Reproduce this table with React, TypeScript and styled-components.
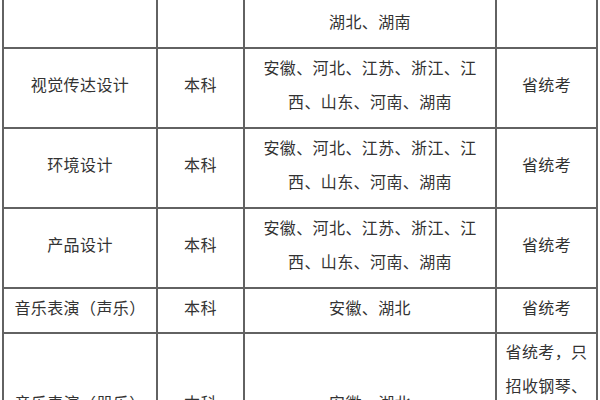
import React from "react";
import styled, { createGlobalStyle } from "styled-components";

const Global = createGlobalStyle`
  html, body { margin: 0; padding: 0; background: #ffffff; }
`;

const Frame = styled.div`
  width: 600px;
  height: 400px;
  overflow: hidden;
  background: #ffffff;
`;

const Table = styled.table`
  border-collapse: collapse;
  table-layout: fixed;
  width: 596px;
  margin: -67px 0 0 2px;
  font-family: "Noto Sans CJK SC", "Noto Sans", sans-serif;
  font-size: 16px;
  letter-spacing: 0.4px;
  line-height: 34px;
  color: #333333;
`;

const Col = styled.col<{ $w: number }>`
  width: ${(p) => p.$w}px;
`;

const Row = styled.tr<{ $h: number }>`
  height: ${(p) => p.$h}px;
`;

const Cell = styled.td`
  border: 2px solid #626262;
  text-align: center;
  vertical-align: middle;
  padding: 0 4px 8px;
  white-space: nowrap;
`;

type RowData = { name: string; level: string; regions: string[]; exam: string[]; h: number };

const rows: RowData[] = [
  {
    name: "数字媒体艺术",
    level: "本科",
    regions: ["安徽、河北、江苏、浙江、江", "西、山东、河南、福建、四", "湖北、湖南"],
    exam: ["省统考"],
    h: 114,
  },
  {
    name: "视觉传达设计",
    level: "本科",
    regions: ["安徽、河北、江苏、浙江、江", "西、山东、河南、湖南"],
    exam: ["省统考"],
    h: 80,
  },
  {
    name: "环境设计",
    level: "本科",
    regions: ["安徽、河北、江苏、浙江、江", "西、山东、河南、湖南"],
    exam: ["省统考"],
    h: 80,
  },
  {
    name: "产品设计",
    level: "本科",
    regions: ["安徽、河北、江苏、浙江、江", "西、山东、河南、湖南"],
    exam: ["省统考"],
    h: 80,
  },
  {
    name: "音乐表演（声乐）",
    level: "本科",
    regions: ["安徽、湖北"],
    exam: ["省统考"],
    h: 45,
  },
  {
    name: "音乐表演（器乐）",
    level: "本科",
    regions: ["安徽、湖北"],
    exam: ["省统考，只", "招收钢琴、", "小提琴、古", "筝方向"],
    h: 138,
  },
];

const Lines = ({ items }: { items: string[] }) => (
  <>
    {items.map((t, i) => (
      <React.Fragment key={i}>
        {i > 0 && <br />}
        {t}
      </React.Fragment>
    ))}
  </>
);

export default function App() {
  return (
    <Frame>
      <Global />
      <Table>
        <colgroup>
          <Col $w={154} />
          <Col $w={87} />
          <Col $w={252} />
          <Col $w={101} />
        </colgroup>
        <tbody>
          {rows.map((r, i) => (
            <Row key={i} $h={r.h}>
              <Cell>{r.name}</Cell>
              <Cell>{r.level}</Cell>
              <Cell>
                <Lines items={r.regions} />
              </Cell>
              <Cell>
                <Lines items={r.exam} />
              </Cell>
            </Row>
          ))}
        </tbody>
      </Table>
    </Frame>
  );
}
